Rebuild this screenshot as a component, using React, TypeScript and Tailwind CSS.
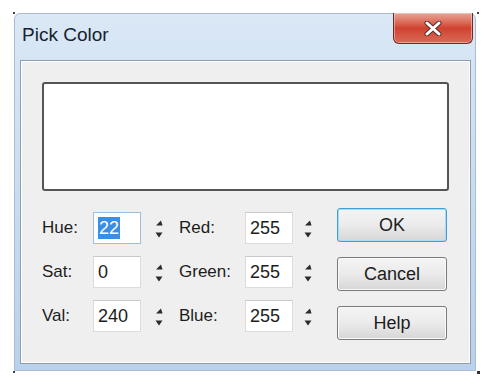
import React from 'react';

const font = { fontFamily: '"Liberation Sans", Arial, sans-serif' };

function Spinner() {
  return (
    <div className="flex flex-col items-center justify-center gap-[6px] pt-[2px]">
      <svg width="8" height="6" viewBox="0 0 8 6">
        <path d="M1 5.5 L6 0.5 L7.5 5.5 Z" fill="#2b2b2b" />
      </svg>
      <svg width="8" height="6" viewBox="0 0 8 6">
        <path d="M0.5 0.5 L7.5 0.5 L4 5.5 Z" fill="#2b2b2b" />
      </svg>
    </div>
  );
}

function Field({ value, selected }: { value: string; selected?: boolean }) {
  return (
    <div
      className={
        'h-[32px] bg-white border flex items-center pl-[4px] text-[18px] text-[#1c1c1c] ' +
        (selected ? 'border-[#9cc0e0]' : 'border-[#dcdcdc] border-t-[#c8c8c8]')
      }
    >
      {selected ? (
        <span className="bg-[#3a8ee6] text-white leading-[22px] px-[1px]">{value}</span>
      ) : (
        <span>{value}</span>
      )}
    </div>
  );
}

function Row({ label, value, label2, value2, selected }: { label: string; value: string; label2: string; value2: string; selected?: boolean }) {
  return (
    <div className="flex items-center h-[32px]">
      <div className="w-[51px] text-[17px] text-[#1c1c1c]">{label}</div>
      <div className="w-[48px]">
        <Field value={value} selected={selected} />
      </div>
      <div className="w-[38px] flex justify-center pr-[3px]">
        <Spinner />
      </div>
      <div className="w-[66px] text-[17px] text-[#1c1c1c]">{label2}</div>
      <div className="w-[48px]">
        <Field value={value2} />
      </div>
      <div className="w-[44px] flex justify-center pr-[15px]">
        <Spinner />
      </div>
    </div>
  );
}

function Btn({ children, focused }: { children: React.ReactNode; focused?: boolean }) {
  return (
    <div
      className={
        'w-[110px] h-[34px] rounded-[3px] border flex items-center justify-center text-[18px] text-[#1c1c1c] bg-gradient-to-b from-[#f4f4f4] via-[#ebebeb] to-[#d6d6d6] ' +
        (focused ? 'border-[#3f9fd8] shadow-[inset_0_0_0_1px_#a8dcf5]' : 'border-[#7a7a7a] shadow-[inset_0_0_0_1px_#fafafa]')
      }
    >
      {children}
    </div>
  );
}

export default function App() {
  return (
    <div className="w-[489px] h-[378px] bg-white relative overflow-hidden" style={font}>
      {/* corner marks */}
      <div className="absolute left-[13px] top-[12px] w-[2px] h-[2px] bg-[#444]" />
      <div className="absolute left-[477px] top-[12px] w-[2px] h-[2px] bg-[#444]" />
      <div className="absolute left-[13px] top-[371px] w-[2px] h-[2px] bg-[#444]" />
      <div className="absolute left-[477px] top-[371px] w-[3px] h-[3px] bg-[#333]" />

      <div className="ml-[14px] mt-[13px] w-[462px] h-[358px] border border-[#a9bdd2] rounded-t-[6px] bg-gradient-to-b from-[#dae8f6] via-[#cadcef] to-[#b9d1ea] flex flex-col relative">
        {/* title bar */}
        <div className="h-[46px] flex items-center pl-[7px] pb-[4px]">
          <span className="text-[19px] text-[#17222e]">Pick Color</span>
        </div>

        {/* close button */}
        <div className="absolute left-[378px] top-[-1px] w-[80px] h-[31px] rounded-b-[6px] border border-[#6e2a22] border-t-0 bg-gradient-to-b from-[#e7a597] via-[#d0412f] to-[#d96a58] flex items-center justify-center shadow-[inset_0_0_0_1px_rgba(255,220,210,0.5)]">
          <svg width="18" height="15" viewBox="0 0 18 15">
            <path d="M3 2 L15 13 M15 2 L3 13" stroke="#5a2a25" strokeWidth="5" strokeLinecap="round" />
            <path d="M3 2 L15 13 M15 2 L3 13" stroke="#ffffff" strokeWidth="3" strokeLinecap="round" />
          </svg>
        </div>

        {/* client area */}
        <div className="ml-[5px] mr-[4px] mb-[6px] flex-1 border border-[#8c9db1] bg-[#efefef] shadow-[inset_0_0_0_1px_#ffffff] pt-[21px] px-[21px]">
          <div className="h-[109px] w-[407px] bg-white border-2 border-[#555] rounded-[3px]" />

          <div className="flex mt-[17px]">
            <div className="flex flex-col gap-[12px] pt-[4px]">
              <Row label="Hue:" value="22" label2="Red:" value2="255" selected />
              <Row label="Sat:" value="0" label2="Green:" value2="255" />
              <Row label="Val:" value="240" label2="Blue:" value2="255" />
            </div>
            <div className="flex flex-col gap-[15px]">
              <Btn focused>OK</Btn>
              <Btn>Cancel</Btn>
              <Btn>Help</Btn>
            </div>
          </div>
        </div>
      </div>
    </div>
  );
}
